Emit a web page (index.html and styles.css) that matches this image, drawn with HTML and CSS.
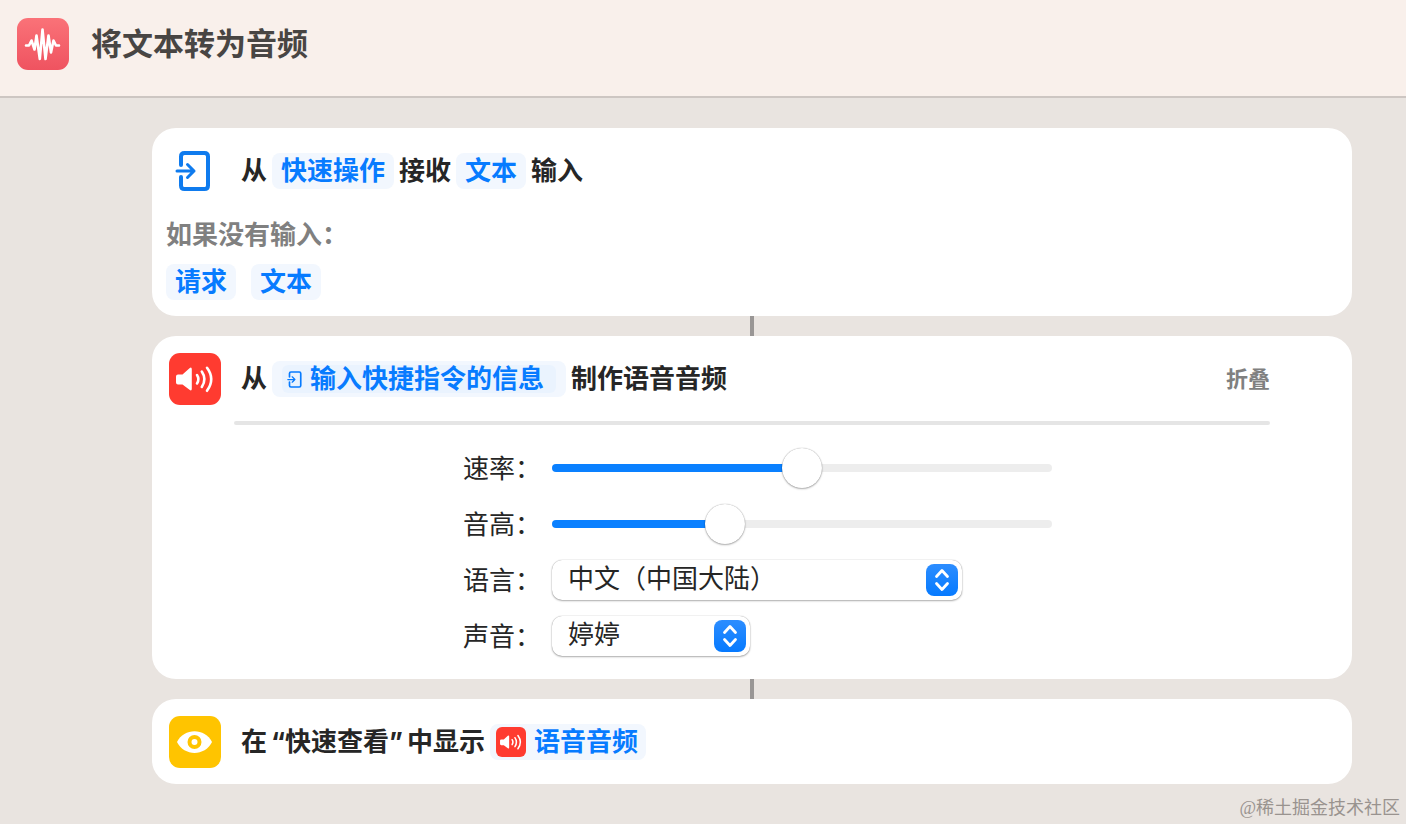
FILE: index.html
```
<!DOCTYPE html>
<html lang="zh-CN">
<head>
  <meta charset="UTF-8">
  <title>将文本转为音频</title>
  <link rel="stylesheet" href="styles.css">
</head>
<body>

<!-- shared icons -->
<svg class="sprite" aria-hidden="true">
  <symbol id="icon-input" viewBox="0 0 36 40">
    <path d="M6 14V5.500Q6 2 9.500 2H29.500Q33 2 33 5.500V34.500Q33 38 29.500 38H9.500Q6 38 6 34.500V26" fill="none" stroke="currentColor" stroke-width="4" stroke-linecap="round"/>
    <path d="M2 20H19M12.500 13.500L19 20L12.500 26.500" fill="none" stroke="currentColor" stroke-width="3" stroke-linecap="round" stroke-linejoin="round"/>
  </symbol>
  <symbol id="icon-speaker" viewBox="0 0 52 52">
    <path d="M9 21.500H13.500L20.500 15.200Q22.800 13.500 22.800 16.500V35.500Q22.800 38.500 20.500 36.800L13.500 31.500H9Q7 31.500 7 29.500V23.500Q7 21.500 9 21.500Z" fill="currentColor"/>
    <path d="M28 22Q30.800 26.200 28 30.500M32.800 18.500Q38 26.200 32.800 34M38 14.800Q46.500 26.200 38 37.800" fill="none" stroke="currentColor" stroke-width="2.600" stroke-linecap="round"/>
  </symbol>
  <symbol id="icon-updown" viewBox="0 0 32 32">
    <path d="M10.500 12.500L16 6.500L21.500 12.500M10.500 19.500L16 25.500L21.500 19.500" fill="none" stroke="currentColor" stroke-width="2.800" stroke-linecap="round" stroke-linejoin="round"/>
  </symbol>
</svg>

<header class="header">
  <svg class="icon icon-app" viewBox="0 0 52 52">
    <path d="M9 27.500H12L14.500 22.500L17.500 31.500L19.500 17.500L22.800 41L25.500 11.500L28.500 41L31.500 17.500L34 34.500L36.500 22.500L39 27.500H42" fill="none" stroke="currentColor" stroke-width="2.600" stroke-linecap="round" stroke-linejoin="round"/>
  </svg>
  <h1>将文本转为音频</h1>
</header>

<main class="flow">
  <section class="card">
    <div class="row">
      <div class="icon icon-plain"><svg><use href="#icon-input"/></svg></div>
      <div class="action">
        <span>从</span>
        <button class="chip">快速操作</button>
        <span>接收</span>
        <button class="chip">文本</button>
        <span>输入</span>
      </div>
    </div>
    <div class="fallback">
      <p>如果没有输入：</p>
      <div class="options">
        <button class="chip">请求</button>
        <button class="chip">文本</button>
      </div>
    </div>
  </section>

  <div class="connector"></div>

  <section class="card">
    <div class="row">
      <svg class="icon icon-red"><use href="#icon-speaker"/></svg>
      <div class="action">
        <span>从</span>
        <button class="chip chip-variable"><span class="variable"><svg><use href="#icon-input"/></svg>输入快捷指令的信息</span></button>
        <span>制作语音音频</span>
      </div>
      <button class="collapse">折叠</button>
    </div>
    <hr>
    <form class="settings">
      <label for="rate">速率：</label>
      <input type="range" id="rate" min="0" max="2" step="any" value="1" style="--fill: 50%">

      <label for="pitch">音高：</label>
      <input type="range" id="pitch" min="0" max="3" step="any" value="1" style="--fill: 35%">

      <label for="language">语言：</label>
      <div class="select select-wide">
        <select id="language"><option>中文（中国大陆）</option></select>
        <svg><use href="#icon-updown"/></svg>
      </div>

      <label for="voice">声音：</label>
      <div class="select">
        <select id="voice"><option>婷婷</option></select>
        <svg><use href="#icon-updown"/></svg>
      </div>
    </form>
  </section>

  <div class="connector"></div>

  <section class="card card-last">
    <div class="row">
      <svg class="icon icon-yellow" viewBox="0 0 52 52">
        <path d="M8 26C15 11.500 36 11.500 43 26C36 40.500 15 40.500 8 26Z" fill="currentColor"/>
        <circle cx="25.500" cy="26" r="5" fill="none" stroke="#ffc400" stroke-width="4"/>
      </svg>
      <div class="action">
        <span>在<span class="quoted">“快速查看”</span>中显示</span>
        <button class="chip chip-audio"><svg class="icon-red"><use href="#icon-speaker"/></svg>语音音频</button>
      </div>
    </div>
  </section>
</main>

<footer>@稀土掘金技术社区</footer>

<script>
  // keep the blue part of the track under the thumb
  document.querySelectorAll('input[type="range"]').forEach(function(slider) {
    slider.addEventListener('input', function() {
      slider.style.setProperty('--fill', slider.value / slider.max * 100 + '%');
    });
  });
</script>

</body>
</html>
```
FILE: styles.css
```
* {
  box-sizing: border-box;
}

body {
  margin: 0;
  min-height: 100vh;
  background: #e9e4e0;
  color: #262626;
  font-family: Inter, "Noto Sans CJK SC", sans-serif;
  font-size: 26px;
  line-height: 36px;
}

button, select {
  font: inherit;
  color: inherit;
  border: none;
  background: none;
  padding: 0;
  cursor: pointer;
}

.sprite {
  position: absolute;
  width: 0;
  height: 0;
}

.header {
  display: flex;
  align-items: center;
  gap: 22px;
  padding: 18px 17px 26px;
  background: #f9f0eb;
  border-bottom: 2px solid #cdc6c2;
}

.header h1 {
  margin: 0;
  font-size: 31px;
  line-height: 44px;
  font-weight: 700;
  color: #484543;
}

.icon {
  flex: none;
  width: 52px;
  height: 52px;
  border-radius: 11px;
  color: #fff;
}

.icon-app {
  background: linear-gradient(#fa7278, #ef5360);
}

.icon-red {
  background: #ff3b30;
}

.icon-yellow {
  background: #ffc400;
}

.icon-plain {
  display: flex;
  align-items: center;
  padding-left: 6px;
  color: #0f7bee;
}

.icon-plain svg {
  width: 36px;
  height: 40px;
}

.flow {
  padding: 30px 54px 0 152px;
}

.card {
  padding: 17px 82px 23px 17px;
  background: #fff;
  border-radius: 24px;
}

.card:first-child {
  padding-bottom: 16px;
}

.card-last {
  padding-bottom: 16px;
}

.connector {
  width: 4px;
  height: 20px;
  margin: 0 auto;
  background: #999695;
}

.row {
  display: flex;
  align-items: center;
  gap: 20px;
}

.action {
  display: flex;
  align-items: center;
  gap: 5px;
  font-weight: 700;
}

.quoted {
  margin: 0 4px;
}

.chip {
  height: 36px;
  padding: 0 9px;
  border-radius: 8px;
  background: #f2f7fe;
  color: #077bff;
  font-weight: 700;
  white-space: nowrap;
}

.fallback {
  margin-left: -3px;
  padding-top: 20px;
}

.fallback p {
  margin: 0;
  color: #808080;
  font-weight: 700;
}

.options {
  display: flex;
  gap: 15px;
  padding-top: 11px;
}

.chip-variable {
  padding: 0 10px;
}

.variable {
  display: flex;
  align-items: center;
  gap: 8px;
  height: 28px;
  padding: 0 12px 0 5px;
  border-radius: 6px;
  background: #eaf3fe;
}

.variable svg {
  width: 15px;
  height: 17px;
}

.chip-audio {
  display: flex;
  align-items: center;
  gap: 8px;
  padding: 0 8px 0 6px;
}

.chip-audio svg {
  width: 30px;
  height: 30px;
  border-radius: 6px;
  color: #fff;
}

.collapse {
  margin-left: auto;
  font-size: 22px;
  font-weight: 700;
  color: #808080;
}

hr {
  height: 4px;
  margin: 16px 0 23px 65px;
  border: none;
  border-radius: 2px;
  background: #e5e5e5;
}

.settings {
  display: grid;
  grid-template-columns: 78px minmax(0, 500px);
  grid-auto-rows: 40px;
  align-items: center;
  gap: 16px 11px;
  padding-left: 294px;
}

.settings label {
  padding-top: 2px;
}

input[type="range"] {
  appearance: none;
  width: 100%;
  height: 40px;
  margin: 0;
  background: none;
}

input[type="range"]::-webkit-slider-runnable-track {
  height: 8px;
  border-radius: 4px;
  background: linear-gradient(to right, #0a80ff var(--fill), #ededed var(--fill));
}

input[type="range"]::-webkit-slider-thumb {
  appearance: none;
  width: 40px;
  height: 40px;
  margin-top: -16px;
  border-radius: 50%;
  background: #fff;
  box-shadow: 0 0 1px rgba(0, 0, 0, 0.4), 0 1px 2px rgba(0, 0, 0, 0.3);
}

.select {
  position: relative;
  width: 198px;
}

.select-wide {
  width: 410px;
}

.select select {
  display: block;
  appearance: none;
  width: 100%;
  height: 40px;
  padding: 0 44px 2px 16px;
  border-radius: 10px;
  background: #fff;
  box-shadow: 0 0 1px rgba(0, 0, 0, 0.4), 0 1px 2px rgba(0, 0, 0, 0.3);
}

.select svg {
  position: absolute;
  top: 4px;
  right: 4px;
  width: 32px;
  height: 32px;
  border-radius: 8px;
  background: linear-gradient(#2c8dff, #067aff);
  color: #fff;
  pointer-events: none;
}

footer {
  padding: 8px 6px 0 0;
  text-align: right;
  font-family: "Liberation Serif", "Noto Sans CJK SC", serif;
  font-size: 18px;
  line-height: 32px;
  color: #99938f;
}
```
